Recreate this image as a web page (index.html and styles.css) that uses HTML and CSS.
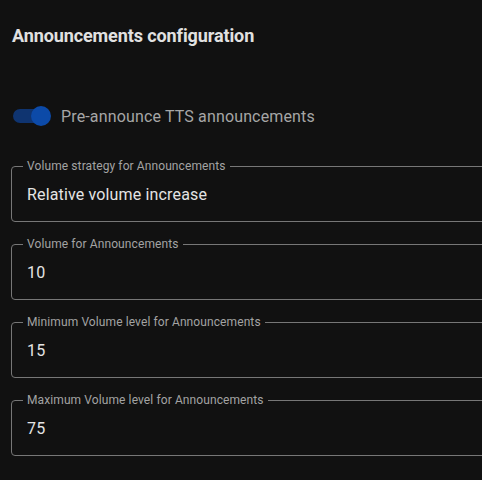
FILE: index.html
```html
<!DOCTYPE html>
<html>
<head>
<meta charset="utf-8">
<link rel="stylesheet" href="styles.css">
</head>
<body>
<div class="page">
  <h2 class="title">Announcements configuration</h2>
  <div class="toggle-row">
    <span class="switch"><span class="track"></span><span class="thumb"></span></span>
    <span class="toggle-label">Pre-announce TTS announcements</span>
  </div>
  <div class="fields">
    <div class="field">
      <span class="field-label">Volume strategy for Announcements</span>
      <span class="field-value">Relative volume increase</span>
    </div>
    <div class="field">
      <span class="field-label">Volume for Announcements</span>
      <span class="field-value">10</span>
    </div>
    <div class="field">
      <span class="field-label">Minimum Volume level for Announcements</span>
      <span class="field-value">15</span>
    </div>
    <div class="field">
      <span class="field-label">Maximum Volume level for Announcements</span>
      <span class="field-value">75</span>
    </div>
  </div>
</div>
</body>
</html>
```

FILE: styles.css
```css
html, body {
  margin: 0;
  padding: 0;
  background: #111111;
  overflow: hidden;
}
body {
  font-family: Roboto, "Liberation Sans", sans-serif;
  color: #e1e1e1;
}
.page {
  padding: 24px 0 0 11px;
  width: 540px;
}
.title {
  margin: 0 0 0 1px;
  font-size: 18px;
  line-height: 24px;
  font-weight: 700;
  letter-spacing: -0.1px;
  color: #e1e1e1;
}
.toggle-row {
  margin-top: 56px;
  height: 24px;
  display: flex;
  align-items: center;
  gap: 10px;
}
.switch {
  position: relative;
  width: 40px;
  height: 24px;
  display: inline-block;
}
.track {
  position: absolute;
  left: 2px;
  top: 5px;
  width: 36px;
  height: 14px;
  border-radius: 7px;
  background: #0f3470;
}
.thumb {
  position: absolute;
  left: 20px;
  top: 2px;
  width: 20px;
  height: 20px;
  border-radius: 50%;
  background: #0c4aa8;
}
.toggle-label {
  font-size: 16px;
  letter-spacing: 0.15px;
  color: #a6a6a6;
}
.fields {
  margin-top: 38px;
  display: flex;
  flex-direction: column;
  gap: 22px;
}
.field {
  position: relative;
  height: 56px;
  box-sizing: border-box;
  border: 1px solid #777777;
  border-radius: 4px;
  padding: 0 15px;
  display: flex;
  align-items: center;
}
.field-label {
  position: absolute;
  left: 11px;
  top: -9px;
  padding: 0 4px;
  background: #111111;
  font-size: 12px;
  line-height: 16px;
  letter-spacing: 0.1px;
  color: #a3a3a3;
}
.field-value {
  font-size: 16px;
  letter-spacing: 0.15px;
  color: #e4e4e4;
}
```
